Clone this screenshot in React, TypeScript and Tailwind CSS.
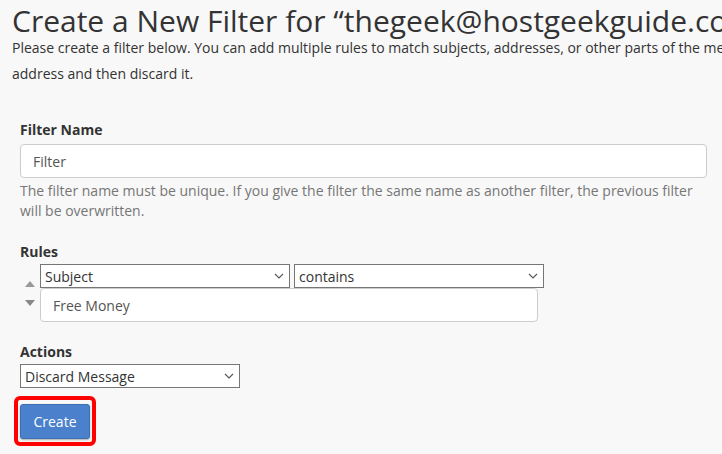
import React from "react";

function Chevron() {
  return (
    <svg width="10" height="6" viewBox="0 0 10 6" className="shrink-0">
      <path d="M1 1 L5 5 L9 1" fill="none" stroke="#555" strokeWidth="1.1" />
    </svg>
  );
}

function Select({ label, className }: { label: string; className: string }) {
  return (
    <div
      className={
        "h-[24px] border border-[#767676] bg-white flex items-center justify-between pl-[4px] pr-[5px] text-[14px] text-[#333] " +
        className
      }
    >
      <span>{label}</span>
      <Chevron />
    </div>
  );
}

export default function App() {
  return (
    <div className="w-[722px] h-[454px] overflow-hidden bg-[#f8f8f8] text-[#333] font-['Open_Sans',sans-serif]">
      <div className="pl-[12px] pt-[4px]">
        <h1 className="text-[30px] leading-[34px] font-normal whitespace-nowrap">
          Create a New Filter for “thegeek@hostgeekguide.com”
        </h1>
        <p className="mt-[-3px] text-[14px] leading-[26px] whitespace-nowrap">
          Please create a filter below. You can add multiple rules to match subjects, addresses, or other parts of the message. You can then add multiple actions to take on a message such as to deliver the message to a different
          <br />
          address and then discard it.
        </p>
      </div>

      <div className="pl-[20px] pr-[15px] pt-[33px]">
        <div className="text-[14px] leading-[20px] font-bold">Filter Name</div>
        <div className="mt-[4px] h-[34px] w-[687px] rounded-[4px] border border-[#ccc] bg-white flex items-center pl-[12px] text-[14px] text-[#555]">
          Filter
        </div>
        <p className="mt-[3px] text-[14px] leading-[20px] text-[#767676] w-[690px]">
          The filter name must be unique. If you give the filter the same name as another filter, the previous filter will be overwritten.
        </p>

        <div className="mt-[21px] text-[14px] leading-[20px] font-bold">Rules</div>
        <div className="flex mt-[2px]">
          <div className="w-[20px] flex flex-col items-center pt-[17px] gap-[13px]">
            <svg width="10" height="6" viewBox="0 0 10 6">
              <path d="M0 6 L5 0 L10 6 Z" fill="#999" />
            </svg>
            <svg width="10" height="6" viewBox="0 0 10 6">
              <path d="M0 0 L5 6 L10 0 Z" fill="#888" />
            </svg>
          </div>
          <div className="flex flex-col">
            <div className="flex gap-[4px]">
              <Select label="Subject" className="w-[250px]" />
              <Select label="contains" className="w-[250px]" />
            </div>
            <div className="h-[34px] w-[498px] rounded-[4px] border border-[#ccc] bg-white flex items-center pl-[12px] text-[14px] text-[#555]">
              Free Money
            </div>
          </div>
        </div>

        <div className="mt-[20px] text-[14px] leading-[20px] font-bold">Actions</div>
        <Select label="Discard Message" className="w-[220px] mt-[2px]" />

        <div className="mt-[8px] ml-[-6px] w-[82px] h-[50px] rounded-[6px] border-[4px] border-[#ff0000] flex items-center justify-center">
          <div className="w-[70px] h-[35px] rounded-[3px] bg-[#4a80cc] border border-[#3f6fb3] text-white text-[14px] flex items-center justify-center shadow-[0_1px_2px_rgba(0,0,0,0.3)]">
            Create
          </div>
        </div>
      </div>
    </div>
  );
}
